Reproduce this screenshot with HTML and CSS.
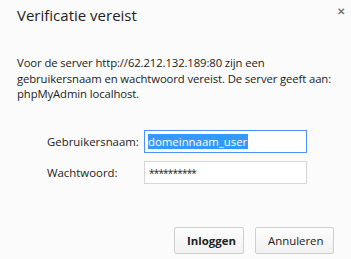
FILE: index.html
```html
<!DOCTYPE html>
<html lang="nl">
<head>
    <meta charset="UTF-8">
    <title>Verificatie vereist</title>
    <link rel="stylesheet" href="styles.css">
</head>
<body>
    <div class="dialog">
        <div class="header">
            <h2 class="title">Verificatie vereist</h2>
            <span class="close">&#x2715;</span>
        </div>

        <p class="message">Voor de server http://62.212.132.189:80 zijn een gebruikersnaam en wachtwoord vereist. De server geeft aan: phpMyAdmin localhost.</p>

        <div class="form">
            <label class="label" for="user">Gebruikersnaam:</label>
            <div class="field focused"><span class="selected">domeinnaam_user</span></div>
            <label class="label" for="pass">Wachtwoord:</label>
            <div class="field"><span class="stars">**********</span></div>
        </div>

        <div class="buttons">
            <button class="btn primary">Inloggen</button>
            <button class="btn">Annuleren</button>
        </div>
    </div>
</body>
</html>
```

FILE: styles.css
```css
body {
    margin: 0;
    background-color: #fbfbfb;
    font-family: "Open Sans", "Noto Sans", sans-serif;
    color: #222;
}
.dialog {
    width: 351px;
    height: 259px;
    box-sizing: border-box;
    padding: 0 17px;
}
.header {
    display: flex;
    justify-content: space-between;
    align-items: flex-start;
    padding-top: 4px;
}
.title {
    margin: 0;
    font-size: 15px;
    font-weight: normal;
    line-height: 22px;
}
.close {
    font-size: 10px;
    font-weight: bold;
    color: #777;
    margin-top: 0;
    margin-right: -11px;
}
.message {
    margin: 29px -6px 0 0;
    font-size: 11.3px;
    line-height: 15.5px;
    letter-spacing: -0.1px;
}
.form {
    display: grid;
    grid-template-columns: 97px 163px;
    row-gap: 8px;
    align-items: center;
    margin: 28px 0 0 30px;
}
.label {
    font-size: 11.4px;
}
.field {
    height: 23px;
    box-sizing: border-box;
    border: 1px solid #d6d6d6;
    background: #fff;
    padding: 3px 2px 0 3px;
    font-size: 11.4px;
    line-height: 15px;
}
.field.focused {
    border-color: #4d90fe;
}
.selected {
    background: #3399ff;
    color: #fff;
    display: inline-block;
    padding-right: 1px;
}
.stars {
    font-size: 10px;
    letter-spacing: -0.8px;
    padding-left: 1px;
}
.buttons {
    display: flex;
    justify-content: flex-end;
    gap: 11px;
    margin-top: 43px;
}
.btn {
    height: 27px;
    font-family: inherit;
    font-size: 11.4px;
    color: #222;
    background: linear-gradient(#fdfdfd, #f1f1f1);
    border: 1px solid #cfcfcf;
    border-radius: 2px;
    padding: 0 12px;
}
.btn.primary {
    font-weight: bold;
    width: 70px;
}
.btn + .btn {
    width: 79px;
}
```
